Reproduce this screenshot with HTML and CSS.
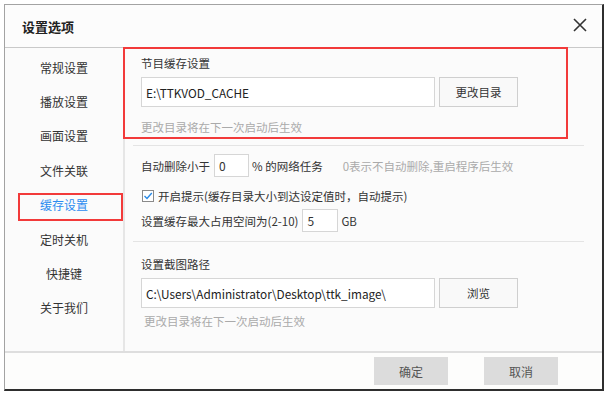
FILE: index.html
```html
<!DOCTYPE html>
<html lang="zh-CN">
<head>
    <meta charset="UTF-8">
    <title>设置选项</title>
    <link rel="stylesheet" href="styles.css">
</head>
<body>
    <div class="window">
        <header class="titlebar">
            <span class="title">设置选项</span>
            <button class="close-btn">
                <svg width="14" height="14" viewBox="0 0 14 14">
                    <path d="M1 1 L13 13 M13 1 L1 13" stroke="#333" stroke-width="1.6" fill="none"/>
                </svg>
            </button>
        </header>

        <div class="main">
            <nav class="sidebar">
                <ul>
                    <li>常规设置</li>
                    <li>播放设置</li>
                    <li>画面设置</li>
                    <li>文件关联</li>
                    <li class="active">缓存设置</li>
                    <li>定时关机</li>
                    <li>快捷键</li>
                    <li>关于我们</li>
                </ul>
            </nav>

            <main class="content">
                <section class="section section-cache">
                    <div class="label">节目缓存设置</div>
                    <div class="path-row">
                        <div class="path-input">E:\TTKVOD_CACHE</div>
                        <button class="btn">更改目录</button>
                    </div>
                    <div class="note">更改目录将在下一次启动后生效</div>
                </section>

                <section class="section section-auto">
                    <div class="row">
                        <span>自动删除小于</span>
                        <span class="small-input w-percent">0</span>
                        <span>% 的网络任务</span>
                        <span class="hint">0表示不自动删除,重启程序后生效</span>
                    </div>
                    <div class="row check-row">
                        <span class="checkbox">
                            <svg width="12" height="12" viewBox="0 0 12 12">
                                <rect x="0.5" y="0.5" width="11" height="11" fill="#fff" stroke="#8a8a8a"/>
                                <path d="M2.5 6 L5 8.5 L9.8 3" stroke="#2a8ae6" stroke-width="1.4" fill="none"/>
                            </svg>
                        </span>
                        <span>开启提示(缓存目录大小到达设定值时，自动提示)</span>
                    </div>
                    <div class="row">
                        <span>设置缓存最大占用空间为(2-10)</span>
                        <span class="small-input w-size">5</span>
                        <span>GB</span>
                    </div>
                </section>

                <section class="section section-shot">
                    <div class="label">设置截图路径</div>
                    <div class="path-row">
                        <div class="path-input">C:\Users\Administrator\Desktop\ttk_image\</div>
                        <button class="btn">浏览</button>
                    </div>
                    <div class="note shot-note">更改目录将在下一次启动后生效</div>
                </section>
            </main>
        </div>

        <footer class="footer">
            <button class="footer-btn">确定</button>
            <button class="footer-btn">取消</button>
        </footer>
    </div>
</body>
</html>
```

FILE: styles.css
```css
* {
    margin: 0;
    padding: 0;
    box-sizing: border-box;
    font-family: "Noto Sans CJK SC", "Noto Sans", sans-serif;
}

body {
    background-color: #ffffff;
    color: #333;
    font-size: 12px;
}

.window {
    margin: 4px 0 0 4px;
    width: 600px;
    height: 387px;
    display: flex;
    flex-direction: column;
    background-color: #fbfbfb;
    border: 1px solid #a3a3a3;
    border-right: 2px solid #2e2e2e;
    border-bottom: 2px solid #2e2e2e;
}

.titlebar {
    height: 43px;
    display: flex;
    align-items: center;
    justify-content: space-between;
    padding: 0 12px 0 17px;
    border-bottom: 1px solid #c9c9c9;
    background-color: #fcfcfc;
    flex-shrink: 0;
}

.title {
    font-size: 13px;
    font-weight: bold;
    color: #222;
}

.close-btn {
    background: none;
    border: none;
    width: 20px;
    height: 20px;
    display: flex;
    align-items: center;
    justify-content: center;
    margin-top: -3px;
}

.main {
    flex: 1;
    display: flex;
    min-height: 0;
}

.sidebar {
    width: 120px;
    border-right: 2px solid #e6e6e6;
    padding-top: 2px;
    flex-shrink: 0;
}

.sidebar ul {
    list-style-type: none;
}

.sidebar li {
    height: 34.4px;
    display: flex;
    align-items: center;
    justify-content: center;
    color: #333;
    position: relative;
}

.sidebar li.active {
    color: #2d8cf0;
}

/* red highlight box around the active entry */
.sidebar li.active::after {
    content: "";
    position: absolute;
    left: 13px;
    right: 0;
    top: 5px;
    height: 24px;
    border: 2px solid #f23a3a;
}

.content {
    flex: 1;
    padding: 0 18px 0 8px;
    font-size: 11.5px;
}

.section {
    padding-left: 8px;
    border-bottom: 1px solid #e4e4e4;
    position: relative;
}

.section-cache {
    padding-top: 7px;
    padding-bottom: 10px;
}

/* red highlight box around the cache section */
.section-cache::after {
    content: "";
    position: absolute;
    left: -10px;
    top: -1px;
    width: 441px;
    height: 88px;
    border: 2px solid #f23a3a;
}

.label {
    line-height: 16px;
    color: #333;
}

.path-row {
    display: flex;
    gap: 4px;
    margin-top: 6px;
}

.path-input {
    width: 294px;
    height: 30px;
    border: 1px solid #d6d6d6;
    background-color: #ffffff;
    padding-left: 4px;
    display: flex;
    align-items: center;
    font-size: 11.8px;
    color: #222;
}

.btn {
    width: 79px;
    height: 30px;
    border: 1px solid #cfcfcf;
    background-color: #f9f9f9;
    color: #333;
    font-size: 11.5px;
}

.note {
    line-height: 16px;
    margin-top: 12px;
    color: #aaaaaa;
}

.section-auto {
    padding-top: 8px;
    padding-bottom: 9px;
}

.row {
    display: flex;
    align-items: center;
    height: 23px;
}

.check-row {
    height: 16px;
    margin-top: 11px;
    margin-bottom: 5px;
}

.small-input {
    height: 23px;
    border: 1px solid #d6d6d6;
    background-color: #ffffff;
    padding-left: 4px;
    display: flex;
    align-items: center;
    margin: 0 3px 0 4px;
    font-size: 12px;
}

.w-percent {
    width: 35px;
}

.w-size {
    width: 36px;
}

.hint {
    color: #aaaaaa;
    margin-left: 20px;
}

.checkbox {
    display: flex;
    margin-right: 4px;
    margin-left: 1px;
}

.section-shot {
    padding-top: 14px;
    border-bottom: none;
}

.shot-note {
    margin-top: 5px;
    padding-left: 3px;
}

.footer {
    height: 38px;
    flex-shrink: 0;
    border-top: 2px solid #dedede;
    background-color: #fdfdfc;
    display: flex;
    justify-content: flex-end;
    align-items: center;
    gap: 36px;
    padding-right: 44px;
}

.footer-btn {
    width: 74px;
    height: 28px;
    border: none;
    background-color: #dcdcdc;
    color: #555;
    font-size: 12px;
}
```
